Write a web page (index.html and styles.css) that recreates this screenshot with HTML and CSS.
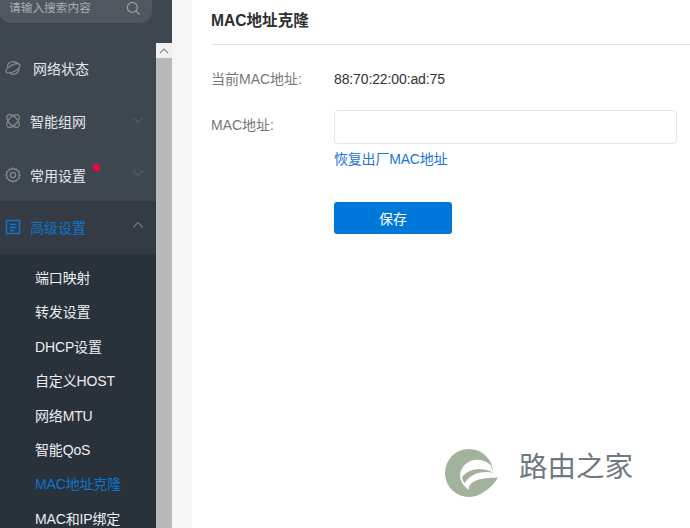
FILE: index.html
```html
<!DOCTYPE html>
<html lang="zh">
<head>
<meta charset="utf-8">
<title>MAC地址克隆</title>
<link rel="stylesheet" href="styles.css">
</head>
<body>
<div class="page">
  <aside class="sidebar">
    <div class="search-wrap">
      <div class="search">
        <span class="search-text">请输入搜索内容</span>
        <svg class="search-icon" viewBox="0 0 16 16" fill="none" stroke="#a4a9ad" stroke-width="1.1"><circle cx="6.8" cy="6.8" r="5.3"/><path d="M10.7 10.7l4 4"/></svg>
      </div>
    </div>
    <div class="menu">
      <div class="item first">
        <svg class="ico" viewBox="0 0 18 18" fill="none" stroke="#858a8e" stroke-width="1.2"><path d="M3.300 8.200A6 5.800 0 0 1 14.500 5.500"/><path d="M15 9.500A6 5.800 0 0 1 6 14.500"/><ellipse cx="9" cy="9.300" rx="7.800" ry="3.300" transform="rotate(-28 9 9.300)"/></svg>
        <span class="label net">网络状态</span>
      </div>
      <div class="item second">
        <svg class="ico" viewBox="0 0 18 18" fill="none" stroke="#858a8e" stroke-width="1.2"><ellipse cx="9" cy="9" rx="8" ry="4.200" transform="rotate(45 9 9)"/><ellipse cx="9" cy="9" rx="8" ry="4.200" transform="rotate(-45 9 9)"/></svg>
        <span class="label">智能组网</span>
        <svg class="chev" viewBox="0 0 12 8" fill="none" stroke="#566068" stroke-width="1.2"><path d="M1 1.500l5 5 5-5"/></svg>
      </div>
      <div class="item third">
        <svg class="ico" viewBox="0 0 18 18" fill="none" stroke="#858a8e" stroke-width="1.3"><path d="M9 2l1.500 1.300 2-.2 1 1.700 1.800.9-.3 2L16 9l-1 1.300.3 2-1.800.9-1 1.700-2-.2L9 16l-1.500-1.300-2 .2-1-1.700-1.800-.9.3-2L2 9l1-1.300-.3-2 1.800-.9 1-1.700 2 .2z"/><circle cx="9" cy="9" r="2.600"/></svg>
        <span class="label">常用设置<i class="dot"></i></span>
        <svg class="chev" viewBox="0 0 12 8" fill="none" stroke="#566068" stroke-width="1.2"><path d="M1 1.500l5 5 5-5"/></svg>
      </div>
      <div class="item active">
        <svg class="ico" viewBox="0 0 18 18" fill="none" stroke="#0c75cf" stroke-width="1.5"><rect x="2.500" y="2.500" width="13" height="13"/><path d="M6 6.500h6.500M6 9.500h6.500M6 12.500h4"/></svg>
        <span class="label">高级设置</span>
        <svg class="chev" viewBox="0 0 12 8" fill="none" stroke="#6d757b" stroke-width="1.2"><path d="M1 6.500l5-5 5 5"/></svg>
      </div>
      <ul class="sub">
        <li>端口映射</li>
        <li>转发设置</li>
        <li>DHCP设置</li>
        <li>自定义HOST</li>
        <li>网络MTU</li>
        <li>智能QoS</li>
        <li class="on">MAC地址克隆</li>
        <li>MAC和IP绑定</li>
      </ul>
    </div>
    <div class="scrollbar">
      <div class="scroll-btn">
        <svg viewBox="0 0 10 6" fill="none" stroke="#8d8d8d" stroke-width="1.200"><path d="M1 5l4-4 4 4"/></svg>
      </div>
    </div>
  </aside>
  <div class="gutter"></div>
  <main class="content">
    <h1 class="title">MAC地址克隆</h1>
    <div class="form">
      <div class="row current">
        <span class="key">当前MAC地址:</span>
        <span class="value">88:70:22:00:ad:75</span>
      </div>
      <div class="row field">
        <label class="key" for="mac">MAC地址:</label>
        <div class="control">
          <input id="mac" class="input" type="text">
          <a class="link" href="#">恢复出厂MAC地址</a>
          <button class="save" type="button">保存</button>
        </div>
      </div>
    </div>
    <div class="watermark">
      <svg class="wm-logo" viewBox="0 0 210 180">
        <circle cx="87" cy="99" r="72" fill="#a3b29d"/>
        <path fill="#a3b29d" d="M90 150C95 122 125 113 174 112C162 135 140 155 110 165Z"/>
        <path fill="#fff" d="M152 76C128 52 88 54 68 82C52 106 62 132 86 150C88 126 104 115 176 112L176 96L160 96C156 88 154 82 152 76Z"/>
        <path fill="#a3b29d" d="M66 112C80 90 116 76 160 98C120 92 92 102 74 130C70 124 67 118 66 112Z"/>
      </svg>
      <span class="wm-text">路由之家</span>
    </div>
  </main>
</div>
</body>
</html>
```
FILE: styles.css
```css
* { box-sizing: border-box; }
html, body { margin: 0; padding: 0; height: 100%; overflow: hidden; background: #fff; }
body { font-family: "Liberation Sans", "Noto Sans CJK SC", sans-serif; font-size: 14px; }
.page { display: flex; height: 528px; width: 690px; }

.sidebar { width: 172px; flex: none; display: flex; flex-wrap: wrap; align-content: flex-start; background: #3e4650; position: relative; overflow: hidden; }
.search-wrap { width: 172px; height: 41px; padding-right: 20px; }
.search { height: 23px; width: 153px; margin-left: -1px; background: #50575f; border-radius: 0 0 12px 12px; display: flex; align-items: center; justify-content: space-between; padding: 0 11px 0 10px; }
.search-text { color: #a9adb1; font-size: 11.700px; position: relative; top: -5px; }
.search-icon { width: 15px; height: 15px; position: relative; top: -3px; }

.menu { width: 156px; }
.item { height: 53px; display: flex; align-items: center; padding-left: 4px; color: #e4e6e8; position: relative; }
.item.second { height: 54px; }
.ico { width: 18px; height: 18px; flex: none; }
.label { margin-left: 8px; position: relative; flex: 1; }
.label.net { margin-left: 11px; }
.dot { position: absolute; left: 63px; top: -1px; width: 7px; height: 7px; background: #f5053c; border-radius: 50%; }
.chev { width: 12px; height: 8px; flex: none; margin-right: 12px; margin-bottom: 3px; }
.item.active { background: #343b44; color: #0c75cf; height: 53px; padding-bottom: 2px; }

.sub { list-style: none; margin: 0; padding: 7px 0 0 35px; background: #29313a; color: #eceeef; height: 300px; letter-spacing: -0.150px; }
.sub li { height: 34.400px; line-height: 34px; white-space: nowrap; }
.sub li.on { color: #0c75cf; }

.scrollbar { position: absolute; left: 156px; top: 43px; width: 16px; height: 485px; background: #b9b9b9; }
.scroll-btn { height: 15px; background: #f1f1f1; display: flex; align-items: center; justify-content: center; }
.scroll-btn svg { width: 10px; height: 6px; }

.gutter { width: 20px; flex: none; background: #f6f6f6; }

.content { flex: 1; padding-left: 19px; position: relative; }
.title { margin: 0; height: 45px; line-height: 41px; font-size: 15.600px; font-weight: 700; color: #303030; border-bottom: 1px solid #e6e6e6; }
.form { padding-top: 24px; }
.row { display: flex; }
.key { width: 123px; flex: none; color: #777; }
.value { color: #333; letter-spacing: -0.120px; }
.current { line-height: 20px; height: 41px; }
.field .key { line-height: 30px; }
.control { display: flex; flex-direction: column; align-items: flex-start; }
.input { width: 343px; height: 34px; border: 1px solid #e6e6e6; border-radius: 4px; background: #fff; outline: none; }
.link { margin-top: 5px; line-height: 20px; color: #1a76d2; text-decoration: none; letter-spacing: -0.200px; }
.save { margin-top: 33px; width: 118px; height: 32px; border: 0; border-radius: 3px; background: #0078da; color: #fff; font: inherit; }

.watermark { position: absolute; left: 248px; top: 440px; display: flex; align-items: center; gap: 9px; }
.wm-logo { width: 70px; height: 60px; }
.wm-text { font-size: 28.500px; color: #6e7a80; line-height: 30px; font-family: "Noto Sans CJK SC", sans-serif; position: relative; top: -5px; }
```
